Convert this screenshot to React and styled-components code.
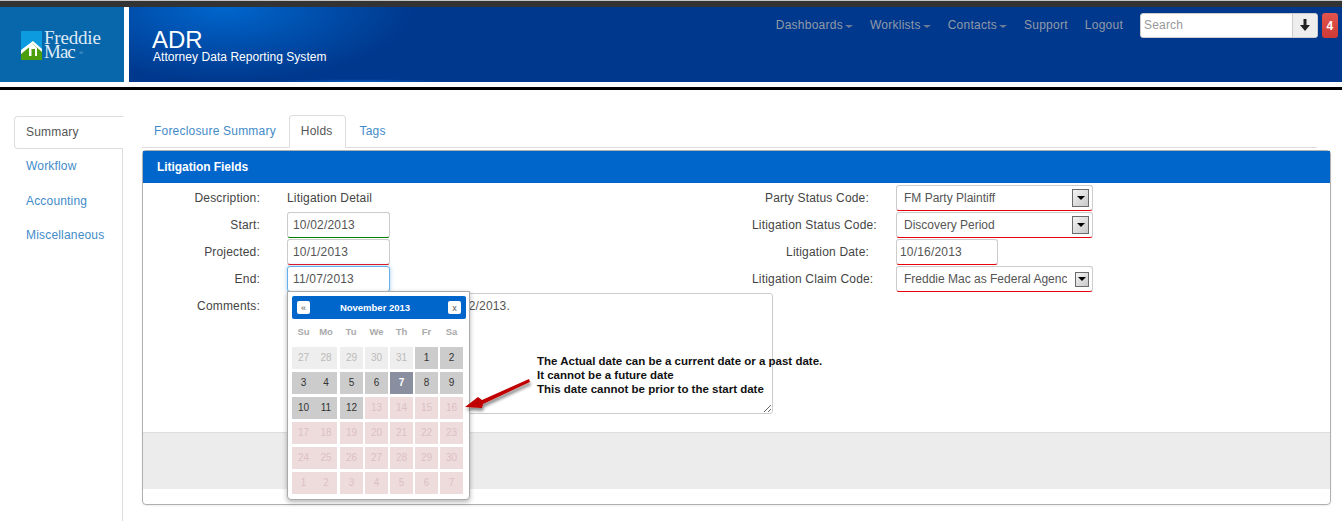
import React from "react";
import styled, { createGlobalStyle } from "styled-components";

const Global = createGlobalStyle`
  html, body { margin: 0; padding: 0; background: #fff; }
  body { font-family: "Liberation Sans", Arial, sans-serif; font-size: 12px; letter-spacing: 0.18px; color: #333; overflow: hidden; }
  * { box-sizing: border-box; }
`;

const Page = styled.div`
  display: flex;
  flex-direction: column;
  height: 521px;
`;

const Header = styled.header`
  display: flex;
  height: 90px;
  border-top: 1px solid #c4c4c4;
  background: #fff;
  flex-direction: column;
  &::before { content: ""; height: 6px; background: #333; }
  &::after { content: ""; height: 3px; margin-top: 5px; background: #000; }
`;

const HeaderMain = styled.div`
  display: flex;
  height: 75px;
`;

const LogoBlock = styled.div`
  width: 124px;
  margin-right: 5px;
  padding: 23px 0 0 21px;
  display: flex;
  background: #0866ab;
`;

const LogoText = styled.div`
  margin-left: 2px;
  font-family: "Liberation Serif", "Times New Roman", serif;
  font-size: 19px;
  line-height: 14px;
  letter-spacing: -0.2px;
  color: #dfebf6;
  padding-top: 1px;
`;

const LogoMac = styled.span`
  letter-spacing: -1px;
`;

const LogoReg = styled.sup`
  font-size: 6px;
  line-height: 0;
  margin-left: 4px;
  letter-spacing: 0;
  vertical-align: 3px;
  color: #7db2dc;
`;

const Banner = styled.div`
  flex: 1;
  display: flex;
  justify-content: space-between;
  background:
    radial-gradient(ellipse 90px 3px at 230px 100%, #0b5cc0, transparent),
    radial-gradient(ellipse 190px 75px at 95px 0, #0066cc, transparent),
    #00388d;
`;

const Brand = styled.div`
  padding: 20px 0 0 23px;
  color: #fff;
  letter-spacing: 0;
`;

const Title = styled.div`
  font-size: 24px;
  line-height: 25px;
`;

const Subtitle = styled.div`
  font-size: 12px;
  line-height: 12px;
  letter-spacing: 0.05px;
  margin-left: 1px;
  margin-top: -1px;
`;

const Nav = styled.nav`
  display: flex;
  align-items: flex-start;
  padding: 6px 4px 0 0;
`;

const NavLink = styled.a`
  display: flex;
  align-items: center;
  height: 24px;
  margin-right: 17px;
  font-size: 12px;
  letter-spacing: 0.25px;
  color: #929aa8;
`;

const Caret = styled.span`
  width: 0;
  height: 0;
  margin: 2px 0 0 2px;
  border-top: 3px solid #6d7a96;
  border-left: 4px solid transparent;
  border-right: 4px solid transparent;
`;

const SearchGroup = styled.div`
  display: flex;
  width: 178px;
  height: 25px;
  margin-right: 4px;
  background: #fff;
  border: 1px solid #ccc;
  border-radius: 3px;
`;

const SearchInput = styled.input`
  flex: 1;
  min-width: 0;
  padding: 0 3px 2px;
  border: 0;
  outline: 0;
  background: transparent;
  font: 12px "Liberation Sans", Arial, sans-serif;
  letter-spacing: 0.18px;
  &::placeholder { color: #999; opacity: 1; }
`;

const SearchButton = styled.div`
  width: 25px;
  display: flex;
  align-items: center;
  justify-content: center;
  padding-bottom: 2px;
  background: #eee;
  border-left: 1px solid #ccc;
  border-radius: 0 3px 3px 0;
`;

const Badge = styled.div`
  width: 16px;
  height: 25px;
  display: flex;
  align-items: center;
  justify-content: center;
  font-size: 12px;
  font-weight: bold;
  color: #fff;
  background: linear-gradient(#e2544d, #cf3a35);
  border-radius: 3px;
`;

const Content = styled.div`
  flex: 1;
  display: flex;
  min-height: 0;
`;

const Sidebar = styled.aside`
  width: 109px;
  margin-left: 14px;
  padding-top: 26px;
  display: flex;
  flex-direction: column;
`;

const SideActive = styled.a`
  display: block;
  height: 33px;
  padding-left: 11px;
  line-height: 30px;
  color: #555;
  border: 1px solid #ddd;
  border-right: 0;
  border-radius: 4px 0 0 4px;
`;

const SideRest = styled.div`
  flex: 1;
  border-right: 1px solid #ddd;
`;

const SideItem = styled.a`
  display: block;
  height: 34.5px;
  padding-left: 12px;
  line-height: 34px;
  color: #428bca;
`;

const Main = styled.main`
  flex: 1;
  min-width: 0;
  padding: 25px 11px 0 19px;
`;

const TabBar = styled.div`
  display: flex;
  height: 33px;
  margin-right: 14px;
  border-bottom: 1px solid #ddd;
`;

const Tab = styled.a`
  height: 33px;
  margin-right: ${(p) => (p.$active ? 2 : 0)}px;
  padding: 0 12px 0 11px;
  line-height: 31px;
  color: ${(p) => (p.$active ? "#555" : "#428bca")};
  background: ${(p) => (p.$active ? "#fff" : "transparent")};
  border: 1px solid ${(p) => (p.$active ? "#ddd" : "transparent")};
  border-bottom-color: ${(p) => (p.$active ? "#fff" : "transparent")};
  border-radius: 4px 4px 0 0;
  letter-spacing: 0.2px;
`;

const Panel = styled.section`
  position: relative;
  height: 355px;
  margin-top: 2px;
  display: flex;
  flex-direction: column;
  border: 1px solid #b0b0b0;
  border-radius: 4px;
  box-shadow: 0 1px 2px rgba(0, 0, 0, 0.08);
`;

const PanelTitle = styled.h3`
  margin: 0;
  height: 32px;
  padding-left: 14px;
  line-height: 32px;
  font-size: 12px;
  font-weight: bold;
  letter-spacing: -0.05px;
  color: #fff;
  background: #0066cc;
`;

const PanelBody = styled.div`
  flex: 1;
  display: flex;
  padding-top: 2px;
`;

const Column = styled.div`
  width: ${(p) => p.$width}px;
  flex: none;
  display: flex;
  flex-direction: column;
  gap: 1px;
`;

const Row = styled.div`
  display: flex;
  align-items: ${(p) => (p.$top ? "flex-start" : "stretch")};
  min-height: 26px;
`;

const Label = styled.label`
  width: 117px;
  margin-right: 27px;
  flex: none;
  text-align: right;
  white-space: nowrap;
  line-height: 26px;
  color: #444;
`;

const StaticValue = styled.div`
  line-height: 26px;
  color: #444;
`;

const DateInput = styled.input`
  width: ${(p) => p.$width || 103}px;
  height: 26px;
  padding: 0 0 0 ${(p) => p.$pad || 5}px;
  font: 12px "Liberation Sans", Arial, sans-serif;
  letter-spacing: 0.18px;
  color: #555;
  background: #fff;
  outline: 0;
  border: 1px solid ${(p) => (p.$focus ? "#66afe9" : "#ccc")};
  border-bottom: 1px solid ${(p) => p.$line || (p.$focus ? "#66afe9" : "#ccc")};
  border-radius: 3px;
  box-shadow: ${(p) => (p.$focus ? "0 0 4px rgba(102,175,233,.6)" : "none")};
`;

const SelectBox = styled.div`
  width: 197px;
  height: 26px;
  display: flex;
  align-items: center;
  padding-right: 3px;
  background: #fff;
  border: 1px solid #ccc;
  border-bottom: 1px solid #e8000b;
  border-radius: 3px;
`;

const NativeSelect = styled.select`
  flex: 1;
  min-width: 0;
  height: 100%;
  margin-right: ${(p) => (p.$narrow ? 6 : 0)}px;
  padding: 0 0 0 7px;
  border: 0;
  outline: 0;
  appearance: none;
  background: transparent;
  font: 12px "Liberation Sans", Arial, sans-serif;
  color: #555;
`;

const SelectArrow = styled.span`
  width: ${(p) => (p.$narrow ? 14 : 17)}px;
  height: ${(p) => (p.$narrow ? 15 : 18)}px;
  margin-left: 2px;
  flex: none;
  display: flex;
  align-items: center;
  justify-content: center;
  border: 1px solid #6b6b6b;
  background: linear-gradient(135deg, #f4f4f4, #c8c8c8);
  &::after {
    content: "";
    border-top: 4px solid #000;
    border-left: 4px solid transparent;
    border-right: 4px solid transparent;
  }
`;

const Comments = styled.textarea`
  width: 486px;
  height: 121px;
  flex: none;
  padding: 5px 11px;
  font: 12px/14px "Liberation Sans", Arial, sans-serif;
  letter-spacing: 0.18px;
  color: #555;
  border: 1px solid #ccc;
  border-radius: 3px;
  outline: 0;
`;

const PanelFooter = styled.div`
  height: 57px;
  margin-bottom: 15px;
  background: #ececec;
  border-top: 1px solid #ddd;
`;

const Picker = styled.div`
  position: absolute;
  left: 144px;
  top: 140px;
  width: 183px;
  height: 209px;
  padding: 4px 3px 4px 4px;
  background: #fff;
  border: 1px solid #aaa;
  border-radius: 0 0 4px 4px;
  box-shadow: 0 2px 5px rgba(0, 0, 0, 0.3);
  letter-spacing: 0;
`;

const PickerHead = styled.div`
  height: 23px;
  padding: 0 5px;
  display: flex;
  align-items: center;
  justify-content: space-between;
  background: #0066cc;
  border-radius: 2px;
  color: #fff;
  font-size: 9.5px;
  font-weight: bold;
`;

const PickerTitle = styled.span`
  margin-right: 8px;
`;

const PickerButton = styled.span`
  width: 13px;
  height: 13px;
  display: flex;
  align-items: center;
  justify-content: center;
  background: #fff;
  border-radius: 2px;
  font-size: 9px;
  font-weight: normal;
  color: #555;
`;

const DayGrid = styled.div`
  display: grid;
  grid-template-columns: 23px 22px 26px 25px 25px 25px 25px;
  grid-auto-rows: 25px;
`;

const WeekRow = styled(DayGrid)`
  height: 28px;
  grid-auto-rows: 28px;
`;

const WeekDay = styled.div`
  line-height: 26px;
  text-align: center;
  font-size: 9.5px;
  font-weight: bold;
  color: #aaa;
  &:nth-child(n + 3) { padding-left: 2px; }
`;

const dayColors = {
  out: ["#eee", "#bbb"],
  on: ["#ccc", "#333"],
  today: ["#8a8f9f", "#fff"],
  off: ["#eedcdc", "#dcc0c4"],
};

const Day = styled.div`
  height: 22px;
  line-height: 22px;
  text-align: center;
  font-size: 10px;
  font-weight: ${(p) => (p.$kind === "today" ? "bold" : "normal")};
  background: ${(p) => dayColors[p.$kind][0]};
  color: ${(p) => dayColors[p.$kind][1]};
  &:nth-child(7n + 3), &:nth-child(7n + 4), &:nth-child(7n + 5), &:nth-child(7n + 6), &:nth-child(7n) {
    width: 23px;
    justify-self: end;
  }
`;

const Note = styled.div`
  position: absolute;
  left: 394px;
  top: 203px;
  font-size: 11.5px;
  line-height: 14px;
  font-weight: bold;
  letter-spacing: 0;
  color: #111;
  white-space: nowrap;
`;

const ArrowArt = styled.svg`
  position: absolute;
  left: 320px;
  top: 222px;
`;

const weeks = [
  [[27, "out"], [28, "out"], [29, "out"], [30, "out"], [31, "out"], [1, "on"], [2, "on"]],
  [[3, "on"], [4, "on"], [5, "on"], [6, "on"], [7, "today"], [8, "on"], [9, "on"]],
  [[10, "on"], [11, "on"], [12, "on"], [13, "off"], [14, "off"], [15, "off"], [16, "off"]],
  [17, 18, 19, 20, 21, 22, 23].map((d) => [d, "off"]),
  [24, 25, 26, 27, 28, 29, 30].map((d) => [d, "off"]),
  [1, 2, 3, 4, 5, 6, 7].map((d) => [d, "off"]),
];

function Logo() {
  return (
    <svg width="21" height="29" viewBox="0 0 21 29" style={{ marginTop: 1, flex: "none" }}>
      <rect width="21" height="29" fill="#0d9be0" />
      <path d="M0 21 L12 10 L21 19 V29 H0 Z" fill="#4c9f0c" />
      <path d="M0 19 L12 10 L21 18 V21 L12 13 L0 23 Z" fill="#fff" />
      <path d="M8 16 L12 13 L16 17 V25 H8 Z" fill="#fff" />
      <rect x="10.5" y="18" width="3.5" height="7" fill="#4c9f0c" />
    </svg>
  );
}

function Choice({ value, narrow }) {
  return (
    <SelectBox>
      <NativeSelect defaultValue={value} $narrow={narrow}>
        <option>{value}</option>
      </NativeSelect>
      <SelectArrow $narrow={narrow} />
    </SelectBox>
  );
}

function App() {
  return (
    <Page>
      <Global />
      <Header>
        <HeaderMain>
          <LogoBlock>
            <Logo />
            <LogoText>
              Freddie
              <br />
              <LogoMac>Mac</LogoMac>
              <LogoReg>®</LogoReg>
            </LogoText>
          </LogoBlock>
          <Banner>
            <Brand>
              <Title>ADR</Title>
              <Subtitle>Attorney Data Reporting System</Subtitle>
            </Brand>
            <Nav>
              <NavLink>Dashboards<Caret /></NavLink>
              <NavLink>Worklists<Caret /></NavLink>
              <NavLink>Contacts<Caret /></NavLink>
              <NavLink>Support</NavLink>
              <NavLink>Logout</NavLink>
              <SearchGroup>
                <SearchInput placeholder="Search" />
                <SearchButton>
                  <svg width="10" height="12" viewBox="0 0 10 12">
                    <path d="M3.5 0 H6.5 V6 H10 L5 12 L0 6 H3.5 Z" fill="#222" />
                  </svg>
                </SearchButton>
              </SearchGroup>
              <Badge>4</Badge>
            </Nav>
          </Banner>
        </HeaderMain>
      </Header>
      <Content>
        <Sidebar>
          <SideActive>Summary</SideActive>
          <SideRest>
            <SideItem>Workflow</SideItem>
            <SideItem>Accounting</SideItem>
            <SideItem>Miscellaneous</SideItem>
          </SideRest>
        </Sidebar>
        <Main>
          <TabBar>
            <Tab>Foreclosure Summary</Tab>
            <Tab $active>Holds</Tab>
            <Tab>Tags</Tab>
          </TabBar>
          <Panel>
            <PanelTitle>Litigation Fields</PanelTitle>
            <PanelBody>
              <Column $width={609}>
                <Row>
                  <Label>Description:</Label>
                  <StaticValue>Litigation Detail</StaticValue>
                </Row>
                <Row>
                  <Label>Start:</Label>
                  <DateInput defaultValue="10/02/2013" $line="#008000" />
                </Row>
                <Row>
                  <Label>Projected:</Label>
                  <DateInput defaultValue="10/1/2013" $line="#e8000b" />
                </Row>
                <Row>
                  <Label>End:</Label>
                  <DateInput defaultValue="11/07/2013" $focus />
                </Row>
                <Row $top>
                  <Label>Comments:</Label>
                  <Comments readOnly defaultValue="Litigation hold was placed 10/02/2013." />
                </Row>
              </Column>
              <Column $width={345}>
                <Row>
                  <Label>Party Status Code:</Label>
                  <Choice value="FM Party Plaintiff" />
                </Row>
                <Row>
                  <Label>Litigation Status Code:</Label>
                  <Choice value="Discovery Period" />
                </Row>
                <Row>
                  <Label>Litigation Date:</Label>
                  <DateInput defaultValue="10/16/2013" $width={102} $pad={3} $line="#e8000b" />
                </Row>
                <Row>
                  <Label>Litigation Claim Code:</Label>
                  <Choice value="Freddie Mac as Federal Agency" narrow />
                </Row>
              </Column>
            </PanelBody>
            <PanelFooter />
            <Picker>
              <PickerHead>
                <PickerButton>«</PickerButton>
                <PickerTitle>November 2013</PickerTitle>
                <PickerButton>x</PickerButton>
              </PickerHead>
              <WeekRow>
                {["Su", "Mo", "Tu", "We", "Th", "Fr", "Sa"].map((d) => (
                  <WeekDay key={d}>{d}</WeekDay>
                ))}
              </WeekRow>
              <DayGrid>
                {weeks.flat().map(([d, kind], i) => (
                  <Day key={i} $kind={kind}>{d}</Day>
                ))}
              </DayGrid>
            </Picker>
            <Note>
              The Actual date can be a current date or a past date.
              <br />
              It cannot be a future date
              <br />
              This date cannot be prior to the start date
            </Note>
            <ArrowArt width="75" height="45" viewBox="0 0 75 45">
              <defs>
                <filter id="arrowShadow" x="-20%" y="-20%" width="140%" height="160%">
                  <feDropShadow dx="1" dy="3" stdDeviation="1.5" floodColor="#000" floodOpacity="0.45" />
                </filter>
              </defs>
              <path d="M66 6 L19 27 L15 24 L2 34 L19 35 L20 31 L67 9 Z" fill="#c00000" filter="url(#arrowShadow)" />
            </ArrowArt>
          </Panel>
        </Main>
      </Content>
    </Page>
  );
}

export default App;
